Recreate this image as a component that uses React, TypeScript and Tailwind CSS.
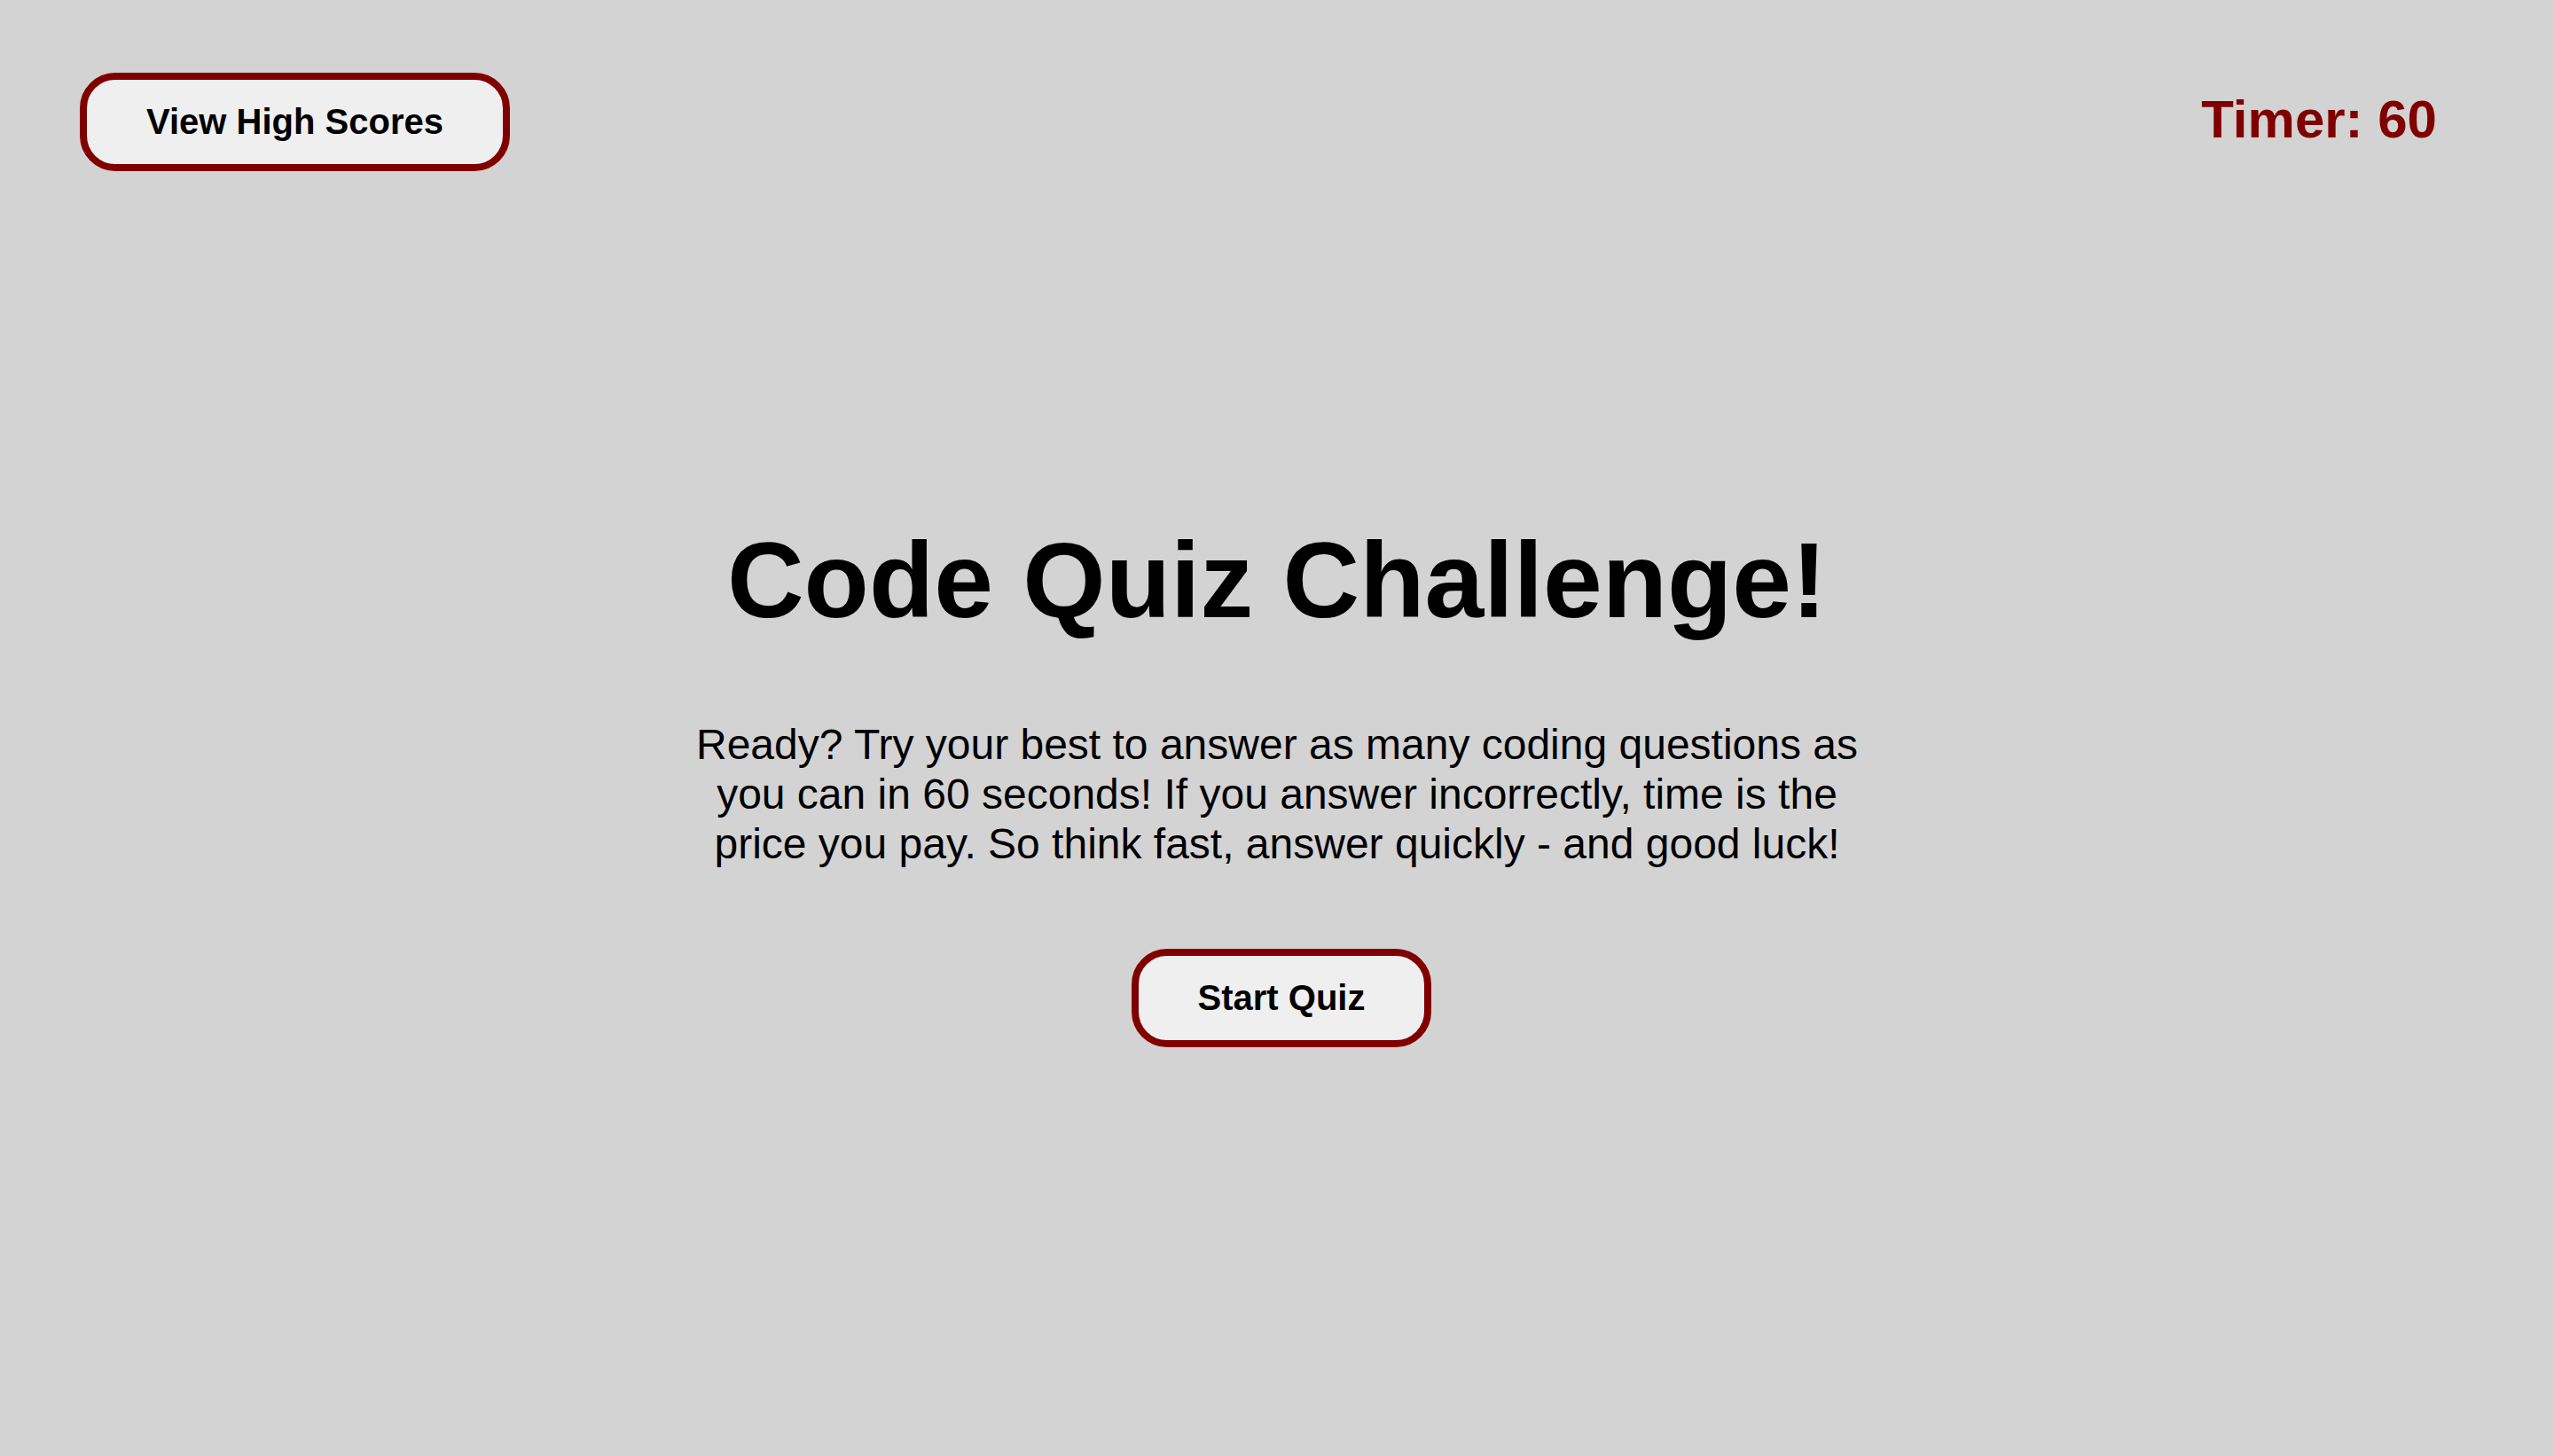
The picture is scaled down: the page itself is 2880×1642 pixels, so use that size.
export default function App() {
  return (
    <div className="min-h-screen w-full bg-[#d3d3d3] text-black font-['Liberation_Sans',Arial,sans-serif]">
      <header className="flex items-start justify-between pl-[90px] pr-[132px] pt-[82px]">
        <button className="rounded-[40px] border-[8px] border-[#800000] bg-[#efefef] px-[67px] py-[24px] text-[40px] font-bold leading-[47px]">
          View High Scores
        </button>
        <div className="mt-[18px] text-[60px] font-bold leading-[69px] text-[#800000]">Timer: 60</div>
      </header>

      <main className="flex flex-col items-center">
        <h1 className="mt-[392px] text-[120px] font-bold leading-[138px]">Code Quiz Challenge!</h1>
        <p className="mt-[89px] w-[1350px] text-center text-[48px] leading-[56px]">
          Ready? Try your best to answer as many coding questions as you can in 60 seconds! If you answer
          incorrectly, time is the price you pay. So think fast, answer quickly - and good luck!
        </p>
        <button className="ml-[10px] mt-[90px] rounded-[40px] border-[8px] border-[#800000] bg-[#efefef] px-[67px] py-[24px] text-[40px] font-bold leading-[47px]">
          Start Quiz
        </button>
      </main>
    </div>
  );
}
